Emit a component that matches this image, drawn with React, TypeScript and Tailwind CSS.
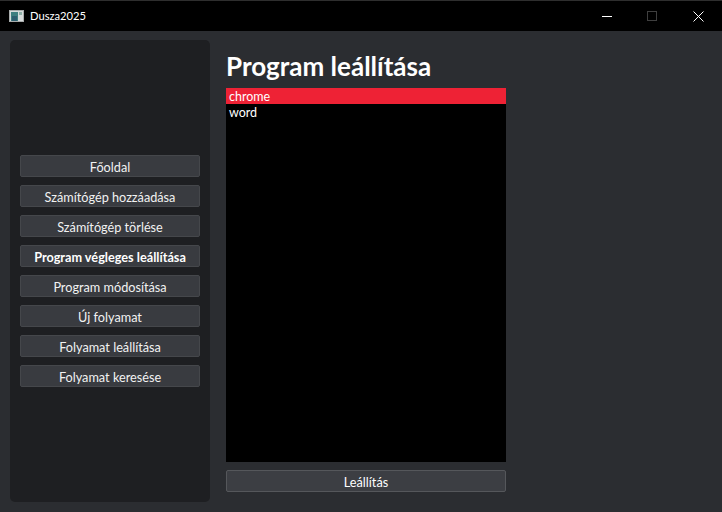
import React from 'react';

const menuItems = [
  { label: 'Főoldal' },
  { label: 'Számítógép hozzáadása' },
  { label: 'Számítógép törlése' },
  { label: 'Program végleges leállítása', active: true },
  { label: 'Program módosítása' },
  { label: 'Új folyamat' },
  { label: 'Folyamat leállítása' },
  { label: 'Folyamat keresése' },
];

function AppIcon() {
  return (
    <svg width="15" height="12" viewBox="0 0 15 12">
      <rect x="0.5" y="0.5" width="14" height="11" fill="#d8dcdc" stroke="#a8acac" />
      <rect x="2" y="2" width="7" height="9" fill="#3f7f80" />
      <rect x="3" y="6" width="5" height="5" fill="#2f5f70" />
      <rect x="10" y="2" width="3" height="3" fill="#8fb0a8" />
    </svg>
  );
}

export default function App() {
  return (
    <div className="w-[722px] h-[512px] flex flex-col bg-[#2b2d31] text-white overflow-hidden font-['Lato','Open_Sans',sans-serif]">
      {/* Title bar */}
      <div className="h-[31px] shrink-0 bg-black border-t border-[#2e2e2e] flex items-center pl-[9px]">
        <AppIcon />
        <span className="ml-[6px] text-[11.2px] text-white">Dusza2025</span>
        <div className="ml-auto flex items-center">
          <div className="w-[46px] flex justify-center">
            <svg width="10" height="10" viewBox="0 0 10 10"><path d="M0 5.5H10" stroke="#fff" /></svg>
          </div>
          <div className="w-[44px] flex justify-center">
            <svg width="10" height="10" viewBox="0 0 10 10"><rect x="0.5" y="0.5" width="9" height="9" fill="none" stroke="#3f3f3f" /></svg>
          </div>
          <div className="w-[48px] flex justify-center">
            <svg width="11" height="11" viewBox="0 0 11 11"><path d="M0.5 0.5L10.5 10.5M10.5 0.5L0.5 10.5" stroke="#fff" /></svg>
          </div>
        </div>
      </div>

      <div className="flex-1 flex pt-[9px] pb-[10px] pl-[10px]">
        {/* Sidebar */}
        <div className="w-[200px] bg-[#1e1f22] rounded-[5px] flex flex-col justify-center gap-2 px-[10px]">
          {menuItems.map((item) => (
            <button
              key={item.label}
              className={`h-[22px] pt-[3px] rounded-[2px] border border-[#45474b] bg-[#393b40] text-[12.7px] leading-none text-[#f2f2f2] ${item.active ? 'font-bold text-white' : ''}`}
            >
              {item.label}
            </button>
          ))}
        </div>

        {/* Content */}
        <div className="w-[280px] ml-4 flex flex-col pt-2">
          <h1 className="h-[40px] text-[26px] leading-[36px] font-bold text-white whitespace-nowrap">Program leállítása</h1>
          <ul className="h-[374px] bg-black text-[12.5px] leading-4">
            <li className="h-4 bg-[#ee2235] pl-[3px] pt-[1px] text-white">chrome</li>
            <li className="h-4 pl-[3px] pt-[1px] text-white">word</li>
          </ul>
          <button className="mt-2 h-[22px] pt-[3px] rounded-[2px] border border-[#55575b] bg-[#3c3e43] text-[12.7px] leading-none text-white">
            Leállítás
          </button>
        </div>
      </div>
    </div>
  );
}
